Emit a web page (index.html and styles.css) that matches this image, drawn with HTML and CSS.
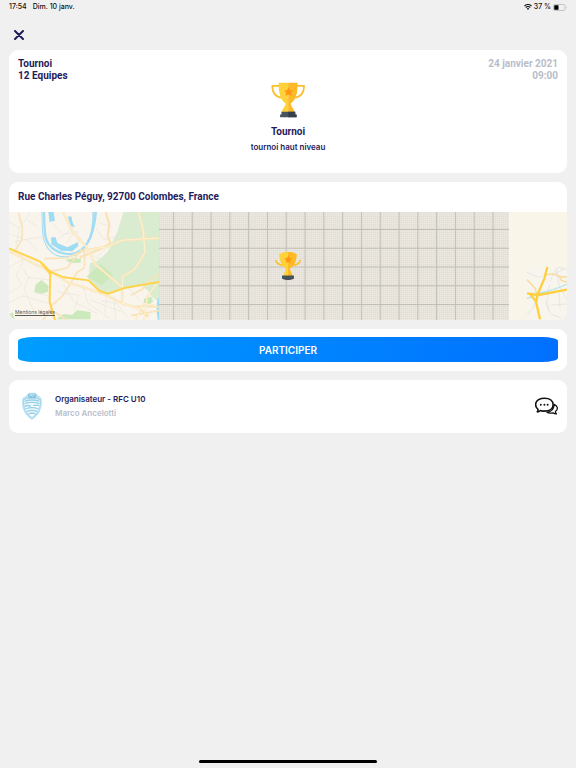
FILE: index.html
```
<!DOCTYPE html>
<html lang="fr">
<head>
    <meta charset="UTF-8">
    <meta name="viewport" content="width=device-width, initial-scale=1.0">
    <title>Tournoi</title>
    <link rel="stylesheet" href="styles.css">
</head>
<body>
<!-- Shared trophy icon -->
<svg class="defs" aria-hidden="true">
    <symbol id="trophy" viewBox="97 22 104 106">
        <path d="M123 33H101C100 53 111 67 130 68M173 33H195C196 53 185 67 166 68" fill="none" stroke="#fbbf2d" stroke-width="5"/>
        <path d="M120 24H148V111H129C132 99 141 93 140 85C126 76 119 55 120 24Z" fill="#fed238"/>
        <path d="M176 24H148V111H167C164 99 155 93 156 85C170 76 177 55 176 24Z" fill="#fcba24"/>
        <path d="M149 37L153 46L163 47L156 53L158 63L149 58L140 63L142 53L136 47L145 46Z" fill="#ff9514"/>
        <path d="M128 110H169V118H173V126H124V118H128Z" fill="#485560"/>
        <path d="M148 110H169V118H173V126H148Z" fill="#35404b"/>
    </symbol>
    <symbol id="pin-trophy" viewBox="374 137 80 88">
        <path d="M376 163C380 174 391 179 401 178M452 163C448 174 437 179 427 178" fill="none" stroke="#fbbf2d" stroke-width="5"/>
        <path d="M387 145Q399 138 414 138V211H400C403 199 409 193 408 188C395 182 388 164 387 145Z" fill="#fed238"/>
        <path d="M441 145Q429 138 414 138V211H428C425 199 419 193 420 188C433 182 440 164 441 145Z" fill="#fcba24"/>
        <path d="M415 149L419 157L427 158L421 163L423 172L415 168L407 172L409 163L403 158L411 157Z" fill="#ff9514"/>
        <path d="M396 210H432V220Q414 228 396 220Z" fill="#44505a"/>
    </symbol>
</svg>

<header class="status-bar">
    <span class="status-left"><span>17:54</span><span>Dim. 10 janv.</span></span>
    <span class="status-right">
        <svg class="wifi" viewBox="0 0 16 12" aria-hidden="true">
            <path d="M1 4Q8 -2 15 4M3.5 7Q8 3 12.500 7" fill="none" stroke="#111" stroke-width="2.200"/>
            <path d="M5.500 9Q8 6.500 10.500 9L8 12Z" fill="#111"/>
        </svg>
        <span>37 %</span>
        <svg class="battery" viewBox="0 0 28 14" aria-hidden="true">
            <rect x="1" y="1" width="23" height="12" rx="3" fill="none" stroke="#999"/>
            <rect x="2.500" y="2.500" width="8.500" height="9" rx="1" fill="#000"/>
            <path d="M26 5Q28 7 26 9Z" fill="#999"/>
        </svg>
    </span>
</header>

<button type="button" class="close-btn" aria-label="Fermer">
    <svg viewBox="0 0 10 10" aria-hidden="true"><path d="M1 1L9 9M9 1L1 9"/></svg>
</button>

<main class="content">
    <section class="card event">
        <div class="event-top">
            <div>Tournoi<br>12 Equipes</div>
            <div class="event-date">24 janvier 2021<br>09:00</div>
        </div>
        <svg class="trophy" aria-hidden="true"><use href="#trophy"/></svg>
        <h1>Tournoi</h1>
        <p>tournoi haut niveau</p>
    </section>

    <section class="card place">
        <h2>Rue Charles Péguy, 92700 Colombes, France</h2>
        <div class="map">
            <svg class="map-west" viewBox="27 96 447 324" preserveAspectRatio="none" aria-hidden="true">
                <path fill="#f9f5ed" d="M27 96H474V420H27Z"/>
                <!-- Parks -->
                <g fill="#daecd0">
                    <path d="M368 96H474V308L372 325L320 341L298 333L264 296L268 250L290 243L321 216L350 155Z"/>
                    <path d="M425 320L474 306V365L452 350L440 330Z"/>
                </g>
                <g fill="#cce9bb">
                    <path d="M102 337L107 313L124 300L145 318L143 335L122 343Z"/>
                    <path d="M168 418L190 402L215 405L230 391L270 396L270 418Z"/>
                    <path d="M195 240L218 234L242 236L240 248L211 249Z"/>
                    <path d="M258 290L300 252L338 285L304 316Z"/>
                    <path d="M27 402L38 397L44 418H27Z"/>
                    <path d="M429 356L450 350L457 364L442 378L429 370Z"/>
                </g>
                <!-- Minor streets -->
                <g fill="none" stroke="#e9e4dd" stroke-width="2">
                    <path d="M27 125L58 145L90 100M58 145L47 201M42 185L126 170M27 160L85 183L112 214M82 120L111 140M27 262L72 235L110 260M50 213L72 235L49 285L64 315L27 340"/>
                    <path d="M65 263L86 292L147 300M86 292L72 328L100 390M27 367L70 348L147 371M105 333L148 350M170 335L235 346L222 390M190 315L220 365L290 401M244 313L263 370L327 416"/>
                    <path d="M158 130L188 165L230 154L235 192M174 177L224 139M200 188L219 160M288 145L310 178L354 169M299 130L333 140M329 192L290 232L315 248M261 218L298 240"/>
                    <path d="M300 362L348 370L380 413M318 354L312 400M339 350L345 416M383 325L418 360M395 190L420 170L446 181M385 100L400 140L430 151M270 360L360 394"/>
                </g>
                <!-- River -->
                <g fill="none" stroke="#a2ddf3">
                    <path stroke-width="7" d="M131 96C134 135 129 174 148 196C165 218 206 230 231 217C267 198 280 155 286 96"/>
                    <path stroke-width="3" d="M125 96C128 139 121 183 148 211C174 240 221 233 245 214"/>
                    <path stroke-width="6" d="M279 96C279 140 271 172 261 188"/>
                    <path stroke-width="7" d="M474 355Q467 383 474 420"/>
                </g>
                <path fill="#9edcf4" d="M144 96H160L164 122L148 126ZM202 110L213 109L216 125L223 141L211 139ZM153 172H166L171 189L201 202L231 187L234 198L215 214L182 212L153 193Z"/>
                <!-- Secondary roads -->
                <g fill="none" stroke="#f9e3b8" stroke-width="7">
                    <path d="M188 96L216 155L257 200L284 253L365 322M27 214L150 274L204 308L250 322L312 344L365 370L418 386L442 410M264 209L320 200L363 181L474 174M315 96L326 133L321 170L330 190L298 208L238 232M413 96L427 151L432 218L402 267L366 290L364 374"/>
                </g>
                <g fill="none" stroke="#f9e3b8" stroke-width="5">
                    <path d="M132 236L200 234L257 207M149 275L200 264L244 208M252 260L252 210M155 376L184 350L211 310L230 276L252 263M474 281L442 306L424 328L390 346M404 420L427 370L468 378M387 378L474 381M430 420L439 350L470 306M391 407L474 392"/>
                    <path d="M43 216L65 180L67 143L55 98M128 420L152 389L196 418"/>
                </g>
                <g fill="none" stroke="#fff1cf" stroke-width="3">
                    <path d="M188 96L216 155L257 200L284 253L365 322M27 214L150 274L204 308L250 322L312 344L365 370L418 386M264 209L320 200L363 181L474 174M413 96L427 151L432 218L402 267L366 290L364 374M404 420L427 370L468 378M430 420L439 350L470 306"/>
                </g>
                <!-- Motorways -->
                <path d="M27 205L120 245L151 276L190 292L264 301L297 333L323 341L371 324L474 306M120 245L150 282L148 365L164 420" fill="none" stroke="#ffd34c" stroke-width="6"/>
            </svg>
            <svg class="map-grid" aria-hidden="true">
                <defs>
                    <pattern id="minor" width="2" height="2" patternUnits="userSpaceOnUse">
                        <path d="M0 0H2V2H0Z" fill="#eeebe4"/>
                        <path d="M0 0H2V1H1V2H0Z" fill="#e5e1d9"/>
                    </pattern>
                    <pattern id="major" x="5" y="8" width="18.8" height="18.8" patternUnits="userSpaceOnUse">
                        <path d="M9.500 0V18.8M0 9.500H18.8" stroke="#bfbcb4" stroke-width="1"/>
                    </pattern>
                </defs>
                <rect width="100%" height="100%" fill="url(#minor)"/>
                <rect width="100%" height="100%" fill="url(#major)"/>
            </svg>
            <svg class="map-east" viewBox="57 21 174 324" preserveAspectRatio="none" aria-hidden="true">
                <path fill="#f9f5e9" d="M57 21H231V345H57Z"/>
                <path fill="#f8f4ee" d="M111 186H231V345H111Z"/>
                <g fill="none" stroke="#e3dfda" stroke-width="2">
                    <path d="M111 202L145 217L160 211M181 229L190 205L205 187L230 193M178 240L171 289L177 318M199 190L207 240L231 285M165 287L181 327L214 340M111 327L130 309L134 291M207 263L210 308M182 300L231 297M196 206L224 190"/>
                </g>
                <path d="M111 281L150 264L190 254L231 238" fill="none" stroke="#b9e4ef" stroke-width="4"/>
                <path d="M111 224L136 250L140 270M163 209L191 207L211 215L231 216M207 212L214 226L231 232" fill="none" stroke="#f8dda3" stroke-width="5"/>
                <path d="M172 186L163 221L144 266L138 291L150 343M111 265L145 270L231 254M119 266L139 290" fill="none" stroke="#ffcf3c" stroke-width="7"/>
            </svg>
            <svg class="map-pin" aria-hidden="true"><use href="#pin-trophy"/></svg>
            <a class="map-legal" href="#">Mentions légales</a>
        </div>
    </section>

    <section class="card join">
        <button type="button" class="join-btn">PARTICIPER</button>
    </section>

    <section class="card organizer">
        <svg class="crest" viewBox="0 0 66 84" aria-hidden="true">
            <path d="M20 8L25 2H43L48 8L62 19C66 48 54 72 33 83C12 72 0 48 4 19Z" fill="#b8e1f3"/>
            <path d="M9 23Q33 13 57 23C60 46 50 67 33 77C16 67 6 46 9 23Z" fill="#f4fbfe" stroke="#91cbe6" stroke-width="2"/>
            <path d="M20 5H46L43 19H23Z" fill="#83bddb"/>
            <path d="M25 14L29 7L34 15L40 7M25 8H42" fill="none" stroke="#d6f0fa" stroke-width="2"/>
            <path d="M11 28Q33 20 55 28M11 35Q33 27 55 35M12 43Q21 38 30 43M36 40H54M14 51Q33 43 52 51M18 59Q33 51 48 59M23 66Q33 60 43 66" fill="none" stroke="#94cfe9" stroke-width="4"/>
        </svg>
        <div class="organizer-text">
            <h3>Organisateur - RFC U10</h3>
            <p>Marco Ancelotti</p>
        </div>
        <button type="button" class="chat-btn" aria-label="Message">
            <svg viewBox="404 217 71 54" aria-hidden="true">
                <path d="M413 254C400 242 405 220 433 220C451 220 460 229 460 240C460 252 449 260 433 260C428 260 425 259 421 258Q416 262 411 262Q414 258 413 254Z" fill="none" stroke="#111" stroke-width="5" stroke-linejoin="round"/>
                <path d="M461 238C474 242 477 254 467 261Q467 266 470 268Q465 269 460 265Q449 268 441 264Q462 260 463 240" fill="none" stroke="#111" stroke-width="4" stroke-linejoin="round"/>
                <g fill="#111"><circle cx="422" cy="240" r="3"/><circle cx="433" cy="240" r="3"/><circle cx="443" cy="240" r="3"/></g>
            </svg>
        </button>
    </section>
</main>

<footer class="home-bar"><span></span></footer>
</body>
</html>
```
FILE: styles.css
```
* {
    box-sizing: border-box;
}

body {
    font-family: Inter, "Liberation Sans", sans-serif;
    font-size: 10px;
    line-height: 12px;
    color: #1f1b5a;
    background-color: #f0f0f0;
    margin: 0;
    min-height: 100vh;
    display: flex;
    flex-direction: column;
}

h1, h2, h3, p {
    margin: 0;
}

button {
    font-family: inherit;
    border: none;
    padding: 0;
    background: none;
    cursor: pointer;
}

svg {
    display: block;
    flex-shrink: 0;
}

.defs {
    position: absolute;
    width: 0;
    height: 0;
}

.status-bar {
    display: flex;
    justify-content: space-between;
    align-items: center;
    height: 14px;
    padding: 0 9px;
    font-size: 7px;
    font-weight: 500;
    color: #111;
}

.status-left {
    display: flex;
    gap: 6px;
}

.status-right {
    display: flex;
    align-items: center;
    gap: 2px;
}

.wifi {
    width: 8px;
    height: 6px;
}

.battery {
    width: 14px;
    height: 7px;
}

.close-btn {
    width: 10px;
    height: 10px;
    margin: 16px 14px 10px;
}

.close-btn path {
    fill: none;
    stroke: #1f1b5a;
    stroke-width: 2;
    stroke-linecap: round;
}

.content {
    display: flex;
    flex-direction: column;
    gap: 9px;
    padding: 0 9px;
}

.card {
    background-color: #fff;
    border-radius: 9px;
    overflow: hidden;
}

.event {
    display: flex;
    flex-direction: column;
    align-items: center;
    padding: 8px 9px 20px;
    text-align: center;
}

.event-top,
.event h1,
.place h2 {
    font-family: Roboto, "Liberation Sans", sans-serif;
    font-size: 10px;
    font-weight: 700;
}

.event-top {
    display: flex;
    justify-content: space-between;
    width: 100%;
    text-align: left;
}

.event-date {
    color: #b9bdca;
    text-align: right;
}

.trophy {
    width: 35px;
    height: 36px;
}

.event h1 {
    margin-top: 8px;
}

.event p {
    margin-top: 3px;
    font-size: 8px;
    font-weight: 600;
}

.place h2 {
    padding: 9px;
}

.map {
    position: relative;
    display: flex;
    height: 108px;
}

.map-west {
    width: 150px;
    height: 108px;
}

.map-grid {
    flex: 1;
    min-width: 0;
    height: 108px;
}

.map-east {
    width: 58px;
    height: 108px;
}

.map-pin {
    position: absolute;
    top: 50%;
    left: 50%;
    width: 27px;
    height: 29px;
    transform: translate(-50%, -50%);
}

.map-legal {
    position: absolute;
    bottom: 4px;
    left: 6px;
    font-size: 5px;
    line-height: 8px;
    color: #5c5a55;
}

.join {
    padding: 8px 9px 9px;
}

.join-btn {
    display: block;
    width: 100%;
    height: 25px;
    border-radius: 16px / 4px;
    background: linear-gradient(100deg, #009dff, #0070ff);
    color: #fff;
    font-size: 10px;
    font-weight: 600;
}

.organizer {
    display: flex;
    align-items: center;
    padding: 12px 9px 13px;
}

.crest {
    width: 22px;
    height: 28px;
    margin: 0 12px 0 3px;
}

.organizer-text {
    flex: 1;
    font-size: 8px;
    line-height: 14px;
}

.organizer h3 {
    font-size: 8px;
    font-weight: 600;
}

.organizer p {
    color: #b9bdca;
    font-weight: 600;
}

.chat-btn svg {
    width: 23px;
    height: 18px;
}

.home-bar {
    display: flex;
    justify-content: center;
    margin-top: auto;
    padding-bottom: 5px;
}

.home-bar span {
    width: 31%;
    height: 3px;
    border-radius: 2px;
    background-color: #000;
}
```
